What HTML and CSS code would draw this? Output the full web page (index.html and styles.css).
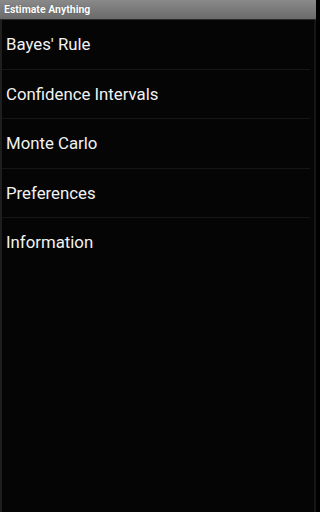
FILE: index.html
```html
<!DOCTYPE html>
<html>
<head>
<meta charset="utf-8">
<link rel="stylesheet" href="styles.css">
</head>
<body>
<div class="screen">
  <div class="titlebar">Estimate Anything</div>
  <ul class="menu">
    <li class="item">Bayes' Rule</li>
    <li class="item">Confidence Intervals</li>
    <li class="item">Monte Carlo</li>
    <li class="item">Preferences</li>
    <li class="item">Information</li>
  </ul>
</div>
</body>
</html>
```
FILE: styles.css
```css
html, body {
  margin: 0;
  padding: 0;
  background: #000;
}
.screen {
  width: 316px;
  height: 512px;
  box-sizing: border-box;
  background: #050505;
  border-left: 2px solid #1e1e1e;
  border-right: 2px solid #161616;
  display: flex;
  flex-direction: column;
  font-family: Roboto, "Noto Sans", sans-serif;
}
.titlebar {
  height: 19px;
  margin-left: -2px;
  margin-right: -2px;
  padding-left: 4px;
  background: linear-gradient(#8a8a8a, #6a6a6a);
  border-bottom: 1px solid #2a2a2a;
  color: #fff;
  font-size: 10.5px;
  font-weight: bold;
  line-height: 19px;
  text-shadow: 0 0 1px #444;
}
.menu {
  list-style: none;
  margin: 0;
  padding: 0;
}
.item {
  height: 48.5px;
  display: flex;
  align-items: center;
  padding-left: 4px;
  margin-right: 4px;
  border-bottom: 1px solid #161616;
  color: #f2f2f2;
  font-size: 16.8px;
}
.item:last-child {
  border-bottom: none;
}
```
